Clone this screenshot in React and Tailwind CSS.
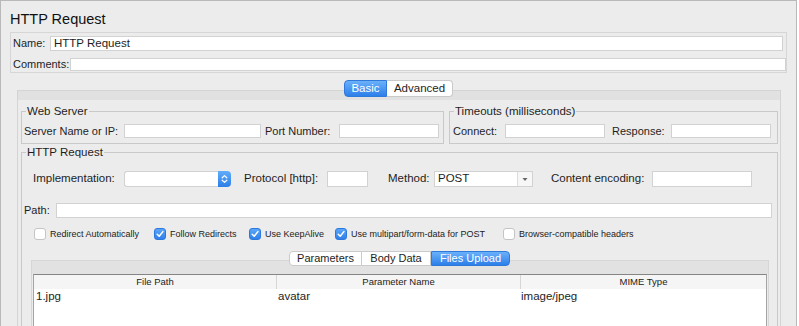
import React from "react";

function Field({ cls, children }) {
  return (
    <div className={"bg-white border border-[#d2d2d2] flex items-center pl-[3px] overflow-hidden whitespace-nowrap " + cls}>
      {children}
    </div>
  );
}

function Check({ checked, label, cls }) {
  return (
    <div className={"flex items-center h-[12px] " + cls}>
      {checked ? (
        <div className="w-[12px] h-[12px] rounded-[3px] bg-gradient-to-b from-[#5aa6f8] to-[#2f80ea] border border-[#2d78dc] flex items-center justify-center">
          <svg width="10" height="10" viewBox="0 0 10 10">
            <path d="M2.2 5.2 L4.2 7.2 L7.9 2.6" stroke="white" strokeWidth="1.5" fill="none" strokeLinecap="round" strokeLinejoin="round" />
          </svg>
        </div>
      ) : (
        <div className="w-[12px] h-[12px] rounded-[3px] bg-white border border-[#c4c4c4]" />
      )}
      <span className="ml-[4px] text-[9px] text-[#222] whitespace-nowrap">{label}</span>
    </div>
  );
}

export default function App() {
  return (
    <div className="w-[797px] h-[326px] overflow-hidden bg-[#ececec] border-l border-t border-r border-[#b9b9b9] font-['Liberation_Sans',Arial,sans-serif] text-[11px] text-[#1e1e1e] leading-none flex flex-col">
      <div className="h-[31px] pl-[9px] pt-[10px] text-[14.5px] leading-[16px] text-[#111]">HTTP Request</div>

      <div className="ml-[9px] w-[777px] h-[41px] border border-[#d6d6d6] pt-[3px] flex flex-col">
        <div className="flex items-center h-[15px]">
          <div className="w-[39px] pl-[2px]">Name:</div>
          <Field cls="w-[733px] h-[15px] text-[11.5px]">HTTP Request</Field>
        </div>
        <div className="flex items-center h-[13px] mt-[7px]">
          <div className="w-[59px] pl-[2px]">Comments:</div>
          <Field cls="w-[716px] h-[13px]" />
        </div>
      </div>

      <div className="mt-[7px] h-[17px] flex justify-center relative z-10 text-[11.5px]">
        <div className="w-[43px] h-[17px] rounded-l-[4px] bg-gradient-to-b from-[#6ab0fa] to-[#2c7fe9] border border-[#2f79db] text-white flex items-center justify-center">Basic</div>
        <div className="w-[66px] h-[17px] rounded-r-[4px] bg-white border border-l-0 border-[#c9c9c9] flex items-center justify-center">Advanced</div>
      </div>

      <div className="mt-[-7px] ml-[16px] w-[764px] h-[236px] border-l border-r border-t border-[#d4d4d4] flex flex-col shrink-0">
        <div className="h-[9px] bg-[#e1e1e1] shrink-0" />
        <div className="pt-[6px] pl-[3px] flex gap-[5px] shrink-0">
          <fieldset className="w-[423px] h-[38px] border border-[#c9c9c9] min-w-0">
            <legend className="ml-[4px] px-[1px] leading-[10px] text-[11.5px]">Web Server</legend>
            <div className="flex items-center h-[14px] mt-[8px]">
              <div className="w-[102px] pl-[2px] whitespace-nowrap">Server Name or IP:</div>
              <Field cls="w-[137px] h-[14px]" />
              <div className="w-[78px] pl-[4px] whitespace-nowrap">Port Number:</div>
              <Field cls="w-[100px] h-[14px]" />
            </div>
          </fieldset>
          <fieldset className="w-[329px] h-[38px] border border-[#c9c9c9] min-w-0">
            <legend className="ml-[4px] px-[1px] leading-[10px] text-[11.5px]">Timeouts (milliseconds)</legend>
            <div className="flex items-center h-[14px] mt-[8px]">
              <div className="w-[55px] pl-[3px] whitespace-nowrap">Connect:</div>
              <Field cls="w-[100px] h-[14px]" />
              <div className="w-[66px] pl-[7px] whitespace-nowrap">Response:</div>
              <Field cls="w-[100px] h-[14px]" />
            </div>
          </fieldset>
        </div>

        <fieldset className="mt-[3px] ml-[3px] w-[757px] flex-1 border border-[#c9c9c9] min-w-0">
          <legend className="ml-[4px] px-[1px] leading-[10px] text-[11.5px]">HTTP Request</legend>
          <div className="flex items-center h-[16px] mt-[14px] text-[11.5px]">
            <div className="w-[102px] pl-[11px] whitespace-nowrap">Implementation:</div>
            <div className="w-[107px] h-[16px] flex">
              <div className="flex-1 bg-white border border-r-0 border-[#d2d2d2] rounded-l-[3px]" />
              <div className="w-[13px] h-[16px] rounded-r-[4px] bg-gradient-to-b from-[#62acf9] to-[#2b7ee8] flex items-center justify-center">
                <svg width="7" height="10" viewBox="0 0 7 10">
                  <path d="M1.2 3.8 L3.5 1.6 L5.8 3.8" stroke="white" strokeWidth="1.2" fill="none" strokeLinecap="round" strokeLinejoin="round" />
                  <path d="M1.2 6.2 L3.5 8.4 L5.8 6.2" stroke="white" strokeWidth="1.2" fill="none" strokeLinecap="round" strokeLinejoin="round" />
                </svg>
              </div>
            </div>
            <div className="w-[96px] pl-[13px] whitespace-nowrap">Protocol [http]:</div>
            <Field cls="w-[41px] h-[16px]" />
            <div className="w-[66px] pl-[20px] whitespace-nowrap">Method:</div>
            <div className="w-[99px] h-[16px] flex bg-white border border-[#d2d2d2]">
              <div className="flex-1 flex items-center pl-[3px]">POST</div>
              <div className="w-[15px] h-full border-l border-[#dcdcdc] bg-[#f7f7f7] flex items-center justify-center">
                <svg width="6" height="5" viewBox="0 0 6 5">
                  <path d="M0.5 1 L5.5 1 L3 4 Z" fill="#666" />
                </svg>
              </div>
            </div>
            <div className="w-[119px] pl-[18px] whitespace-nowrap">Content encoding:</div>
            <Field cls="w-[100px] h-[16px]" />
          </div>

          <div className="flex items-center h-[15px] mt-[16px]">
            <div className="w-[34px] pl-[2px]">Path:</div>
            <Field cls="w-[716px] h-[15px]" />
          </div>

          <div className="flex items-center h-[12px] mt-[10px] pl-[12px]">
            <Check cls="w-[120px]" label="Redirect Automatically" />
            <Check cls="w-[95px]" checked label="Follow Redirects" />
            <Check cls="w-[86px]" checked label="Use KeepAlive" />
            <Check cls="w-[168px]" checked label="Use multipart/form-data for POST" />
            <Check cls="w-[140px]" label="Browser-compatible headers" />
          </div>

          <div className="mt-[11px] h-[15px] flex justify-center relative z-10 text-[11px]">
            <div className="w-[73px] h-[15px] rounded-l-[4px] bg-white border border-[#cbcbcb] flex items-center justify-center">Parameters</div>
            <div className="w-[69px] h-[15px] bg-white border border-l-0 border-[#cbcbcb] flex items-center justify-center">Body Data</div>
            <div className="w-[79px] h-[15px] rounded-r-[4px] bg-gradient-to-b from-[#6ab0fa] to-[#2c7fe9] border border-[#2f79db] text-white flex items-center justify-center">Files Upload</div>
          </div>

          <div className="mt-[-6px] ml-[9px] w-[738px] h-[80px] border-l border-r border-t border-[#d6d6d6] flex flex-col">
            <div className="h-[13px] bg-[#e2e2e2] shrink-0" />
            <div className="ml-[1px] w-[734px] flex-1 border border-[#a3a3a3] border-t-[#858585] bg-white flex flex-col">
              <div className="h-[14px] grid grid-cols-[243px_244px_1fr] bg-[#f5f5f5] text-[9.5px] text-[#222]">
                <div className="border-r border-[#d6d6d6] flex items-center justify-center">File Path</div>
                <div className="border-r border-[#d6d6d6] flex items-center justify-center">Parameter Name</div>
                <div className="flex items-center justify-center">MIME Type</div>
              </div>
              <div className="h-[16px] grid grid-cols-[243px_244px_1fr] items-center text-[11.5px]">
                <div className="pl-[2px]">1.jpg</div>
                <div className="pl-[1px]">avatar</div>
                <div className="pl-[0px]">image/jpeg</div>
              </div>
            </div>
          </div>
        </fieldset>
      </div>
    </div>
  );
}
